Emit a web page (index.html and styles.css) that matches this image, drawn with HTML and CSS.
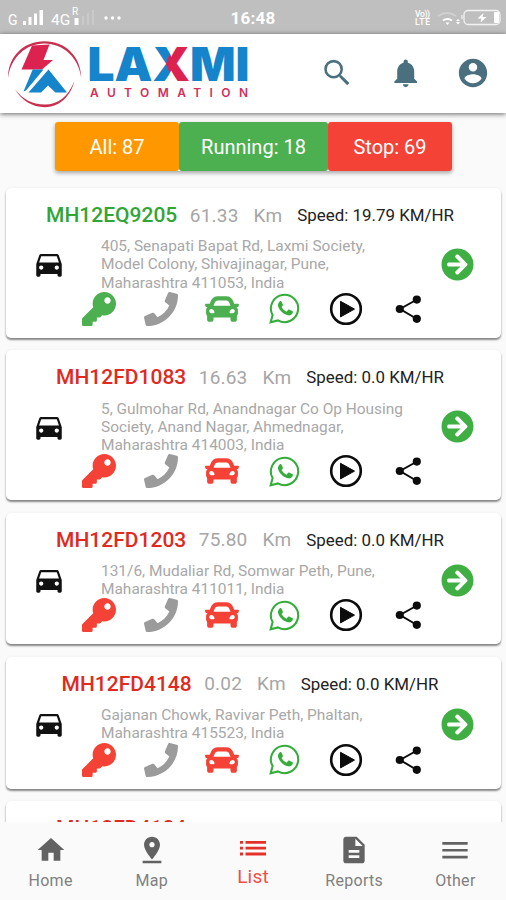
FILE: index.html
```html
<!DOCTYPE html>
<html lang="en">
<head>
    <meta charset="UTF-8">
    <meta name="viewport" content="width=device-width, initial-scale=1.0">
    <title>Laxmi Automation</title>
    <link rel="stylesheet" href="styles.css">
</head>
<body>
    <svg class="sprite" aria-hidden="true">
        <symbol id="car" viewBox="0 0 24 24"><path d="M18.92 6.01C18.72 5.42 18.16 5 17.5 5h-11c-.66 0-1.21.42-1.42 1.01L3 12v8c0 .55.45 1 1 1h1c.55 0 1-.45 1-1v-1h12v1c0 .55.45 1 1 1h1c.55 0 1-.45 1-1v-8l-2.08-5.99zM6.5 16c-.83 0-1.5-.67-1.5-1.5S5.67 13 6.5 13s1.5.67 1.5 1.5S7.33 16 6.5 16zm11 0c-.83 0-1.5-.67-1.5-1.5s.67-1.5 1.5-1.5 1.5.67 1.5 1.5-.67 1.5-1.5 1.5zM5 11l1.5-4.5h11L19 11H5z"/></symbol>
        <symbol id="key" viewBox="0 0 512 512"><path d="M512 176C512 273.2 433.2 352 336 352c-11.2 0-22.2-1.1-32.8-3.1l-24 27A24 24 0 0 1 261.2 384H224v40c0 13.3-10.7 24-24 24h-40v40c0 13.3-10.7 24-24 24H24c-13.3 0-24-10.7-24-24v-78.1c0-6.4 2.5-12.5 7-17l161.8-161.8C163.1 213.8 160 195.3 160 176 160 78.8 238.8 0 336 0c97.5 0 176 78.5 176 176zM336 128c0 26.5 21.5 48 48 48s48-21.5 48-48-21.5-48-48-48-48 21.5-48 48z"/></symbol>
        <symbol id="phone" viewBox="0 0 512 512"><path d="M493.4 24.6l-104-24c-11.3-2.6-22.9 3.3-27.5 13.9l-48 112c-4.2 9.8-1.4 21.3 6.9 28l60.6 49.6c-36 76.7-98.9 140.5-177.2 177.2l-49.6-60.6c-6.8-8.3-18.2-11.1-28-6.9l-112 48C3.9 366.5-2 378.1.6 389.4l24 104C27.1 504.2 36.7 512 48 512c256.1 0 464-207.5 464-464 0-11.2-7.7-20.9-18.6-23.4z"/></symbol>
        <symbol id="taxi" viewBox="0 0 512 512"><path d="M500 176h-59.9l-16.6-41.6C406.4 91.6 365.6 64 319.5 64h-127c-46.1 0-86.9 27.6-104 70.4L71.9 176H12C4.2 176-1.5 183.3.4 190.9l6 24C7.7 220.3 12.5 224 18 224h20.1C24.7 235.7 16 252.8 16 272v48c0 16.1 6.2 30.7 16 41.9V416c0 17.7 14.3 32 32 32h32c17.7 0 32-14.3 32-32v-32h256v32c0 17.7 14.3 32 32 32h32c17.7 0 32-14.3 32-32v-54.1c9.8-11.3 16-25.8 16-41.9v-48c0-19.2-8.7-36.3-22.1-48H494c5.5 0 10.3-3.8 11.6-9.1l6-24c1.9-7.6-3.8-14.9-11.6-14.9zm-352.1-17.8c7.3-18.2 25-30.2 44.6-30.2h127c19.6 0 37.3 12 44.6 30.2L384 208H128l19.9-49.8zM96 319.8c-19.2 0-32-12.8-32-31.9S76.8 256 96 256s48 28.7 48 47.9-28.8 15.9-48 15.9zm320 0c-19.2 0-48 3.2-48-15.9S396.8 256 416 256s32 12.8 32 31.9-12.8 31.9-32 31.9z"/></symbol>
        <symbol id="whatsapp" viewBox="0 0 30 30"><path d="M1.6 28.4l1.9-7A13.2 13.2 0 1 1 8.6 26.5z" fill="none" stroke="currentColor" stroke-width="2"/><path d="M10.3 8.2c.6-.6 1.5-.5 1.9.2l1.2 2.7c.3.7-.1 1.2-1.2 2.4 1.1 2.2 2.6 3.5 4.8 4.600l1.400-1.600c.4-.5.8-.6 1.400-.3l2.700 1.300c.8.4.8.9.4 1.900-.7 1.700-2.700 2.600-4.500 2.200-4.400-1-8.200-4.500-9.500-8.500-.6-1.900.2-3.900 1.400-4.900z"/></symbol>
        <symbol id="play" viewBox="0 0 34 34"><circle cx="17" cy="17" r="14.8" fill="none" stroke="currentColor" stroke-width="2.6"/><path d="M11.500 9.300v15.600L25.500 17.100z" stroke="currentColor" stroke-linejoin="round"/></symbol>
        <symbol id="share" viewBox="0 0 28 30"><path d="M23 5.500L6 15l17 10" fill="none" stroke="currentColor" stroke-width="2"/><circle cx="22.800" cy="5.600" r="4.100"/><circle cx="5.800" cy="15" r="4.100"/><circle cx="22.800" cy="24.800" r="4.100"/></symbol>
        <symbol id="go" viewBox="0 0 512 512"><path d="M256 8c137 0 248 111 248 248S393 504 256 504 8 393 8 256 119 8 256 8zm-28.9 143.6l75.5 72.4H120c-13.3 0-24 10.7-24 24v16c0 13.3 10.7 24 24 24h182.6l-75.5 72.4c-9.7 9.3-9.9 24.8-.4 34.3l11 10.9c9.4 9.4 24.6 9.4 33.9 0L404.3 273c9.4-9.4 9.4-24.6 0-33.9L271.6 106.3c-9.4-9.4-24.6-9.4-33.9 0l-11 10.9c-9.5 9.6-9.3 25.1.4 34.4z"/></symbol>
    </svg>

    <div class="status">
        <svg class="signal" viewBox="0 0 130 34">
            <g font-family="Roboto, sans-serif" fill="#fff">
                <text x="8" y="25" font-size="14">G</text>
                <text x="51" y="25" font-size="15.5">4G</text>
                <text x="72" y="15" font-size="10">R</text>
            </g>
            <path d="M23 21h3v4h-3zM28.5 17h3v8h-3zM34 13.5h3V25h-3zM39.5 10h3.5v15h-3.5zM74.5 18h4v7h-4z" fill="#fff"/>
            <path d="M82 16h2v9h-2zM87 13h2v12h-2zM92 10h2v15h-2z" fill="#cacaca"/>
            <circle cx="106" cy="18" r="1.7" fill="#fff"/><circle cx="112.5" cy="18" r="1.7" fill="#fff"/><circle cx="119" cy="18" r="1.7" fill="#fff"/>
        </svg>
        <span class="time">16:48</span>
        <svg class="battery" viewBox="0 0 96 34">
            <g font-family="Roboto, sans-serif" font-weight="500" font-size="8.5" fill="#fff">
                <text x="5" y="16.5" textLength="15">Vo))</text>
                <text x="5" y="25" textLength="15">LTE</text>
            </g>
            <path d="M28 16q9-6 18 0" fill="none" stroke="#d0d0d0" stroke-width="2"/>
            <path d="M33 20.5q4.5-3 9 0" fill="none" stroke="#fff" stroke-width="2"/>
            <path d="M35.5 22.5h4L37.5 25zM46 21l2-2 2 2zM46 22l2 2.5 2-2.5z" fill="#fff"/>
            <rect x="54" y="10.5" width="36" height="14" rx="4" fill="none" stroke="#f2f2f2" stroke-width="1.3"/>
            <path d="M52 15v4M84.5 12.5h4v10h-4z" fill="#fff" stroke="#fff"/>
            <path d="M73.5 13l-6 5.5h4l-1 4 6-5.5h-4z" fill="#fff"/>
        </svg>
    </div>

    <header class="header">
        <svg class="logo" viewBox="0 34 260 79">
            <defs>
                <pattern id="two-tone" patternUnits="userSpaceOnUse" width="300" height="120">
                    <rect width="300" height="120" fill="#1584cb"/>
                    <path d="M173 44H190.5V84H174L166 64z" fill="#dc2350"/>
                </pattern>
            </defs>
            <path d="M8 78C8 56 24 41.2 44.5 41.2S81 56 81.3 78C78.5 57 63 43.4 44.5 43.4S11 57 8 78z" fill="#c8304f"/>
            <path d="M15 89C21 100 32 107.2 45 107.2S70 98 74.5 81C68 97 58 104.5 45 104.5S22 99 15 89z" fill="#c8304f"/>
            <path d="M32 45.5L49.5 44.5L43.5 60H53L42 69.5H21.5z" fill="#dc2350"/>
            <path d="M32.7 69.5H43.5L26 90.5L23.5 91.5z" fill="#1584cb"/>
            <path d="M48.5 69.5L67 92.5H55.5L48 85.5L41 92.5H28.5z" fill="#1584cb"/>
            <g font-family="Inter, sans-serif">
                <text x="87.5" y="81.3" font-size="47" font-weight="900" textLength="162" lengthAdjust="spacingAndGlyphs" fill="url(#two-tone)">LAXMI</text>
                <text x="90" y="97.3" font-size="12" font-weight="600" textLength="158" fill="#d0305c">AUTOMATION</text>
            </g>
        </svg>
        <div class="tools">
            <svg viewBox="0 0 24 24"><circle cx="9.6" cy="9.3" r="5.7" fill="none" stroke="currentColor" stroke-width="1.8"/><path d="M13.4 14.6l1.3-1.3 6.1 5.7-1.6 1.6z"/></svg>
            <svg viewBox="0 0 24 24"><path d="M12.500 22c1.100 0 2-.9 2-2h-4c0 1.100.89 2 2 2zm6-6v-5c0-3.070-1.640-5.640-4.500-6.320V4c0-.83-.67-1.500-1.500-1.500s-1.500.67-1.500 1.500v.68C8.130 5.360 6.500 7.920 6.500 11v5l-2 2v1h16v-1l-2-2z"/></svg>
            <svg viewBox="0 0 24 24"><path d="M12 2C6.48 2 2 6.48 2 12s4.480 10 10 10 10-4.480 10-10S17.520 2 12 2zm0 3c1.660 0 3 1.340 3 3s-1.340 3-3 3-3-1.340-3-3 1.340-3 3-3zm0 14.200c-2.500 0-4.710-1.280-6-3.220.03-1.990 4-3.080 6-3.080 1.990 0 5.970 1.090 6 3.080-1.290 1.940-3.500 3.220-6 3.220z"/></svg>
        </div>
    </header>

    <main class="content">
        <div class="filters">
            <button class="filter all">All: 87</button>
            <button class="filter running">Running: 18</button>
            <button class="filter stop">Stop: 69</button>
        </div>

        <div class="card is-running">
            <div class="title"><b class="plate">MH12EQ9205</b><span class="km">61.33</span><span class="km unit">Km</span><span class="speed">Speed: 19.79 KM/HR</span></div>
            <div class="info">
                <svg class="car"><use href="#car"/></svg>
                <p class="address">405, Senapati Bapat Rd, Laxmi Society,<br>Model Colony, Shivajinagar, Pune,<br>Maharashtra 411053, India</p>
                <svg class="go"><use href="#go"/></svg>
            </div>
            <div class="actions">
                <svg class="key"><use href="#key"/></svg>
                <svg class="phone"><use href="#phone"/></svg>
                <svg class="taxi"><use href="#taxi"/></svg>
                <svg class="whatsapp"><use href="#whatsapp"/></svg>
                <svg class="play"><use href="#play"/></svg>
                <svg class="share"><use href="#share"/></svg>
            </div>
        </div>

        <div class="card">
            <div class="title"><b class="plate">MH12FD1083</b><span class="km">16.63</span><span class="km unit">Km</span><span class="speed">Speed: 0.0 KM/HR</span></div>
            <div class="info">
                <svg class="car"><use href="#car"/></svg>
                <p class="address">5, Gulmohar Rd, Anandnagar Co Op Housing<br>Society, Anand Nagar, Ahmednagar,<br>Maharashtra 414003, India</p>
                <svg class="go"><use href="#go"/></svg>
            </div>
            <div class="actions">
                <svg class="key"><use href="#key"/></svg>
                <svg class="phone"><use href="#phone"/></svg>
                <svg class="taxi"><use href="#taxi"/></svg>
                <svg class="whatsapp"><use href="#whatsapp"/></svg>
                <svg class="play"><use href="#play"/></svg>
                <svg class="share"><use href="#share"/></svg>
            </div>
        </div>

        <div class="card">
            <div class="title"><b class="plate">MH12FD1203</b><span class="km">75.80</span><span class="km unit">Km</span><span class="speed">Speed: 0.0 KM/HR</span></div>
            <div class="info">
                <svg class="car"><use href="#car"/></svg>
                <p class="address">131/6, Mudaliar Rd, Somwar Peth, Pune,<br>Maharashtra 411011, India</p>
                <svg class="go"><use href="#go"/></svg>
            </div>
            <div class="actions">
                <svg class="key"><use href="#key"/></svg>
                <svg class="phone"><use href="#phone"/></svg>
                <svg class="taxi"><use href="#taxi"/></svg>
                <svg class="whatsapp"><use href="#whatsapp"/></svg>
                <svg class="play"><use href="#play"/></svg>
                <svg class="share"><use href="#share"/></svg>
            </div>
        </div>

        <div class="card">
            <div class="title"><b class="plate">MH12FD4148</b><span class="km">0.02</span><span class="km unit">Km</span><span class="speed">Speed: 0.0 KM/HR</span></div>
            <div class="info">
                <svg class="car"><use href="#car"/></svg>
                <p class="address">Gajanan Chowk, Ravivar Peth, Phaltan,<br>Maharashtra 415523, India</p>
                <svg class="go"><use href="#go"/></svg>
            </div>
            <div class="actions">
                <svg class="key"><use href="#key"/></svg>
                <svg class="phone"><use href="#phone"/></svg>
                <svg class="taxi"><use href="#taxi"/></svg>
                <svg class="whatsapp"><use href="#whatsapp"/></svg>
                <svg class="play"><use href="#play"/></svg>
                <svg class="share"><use href="#share"/></svg>
            </div>
        </div>

        <div class="card">
            <div class="title"><b class="plate">MH12FD4184</b><span class="km">54.20</span><span class="km unit">Km</span><span class="speed">Speed: 0.0 KM/HR</span></div>
        </div>
    </main>

    <nav class="nav">
        <a class="tab">
            <svg viewBox="0 0 24 24"><path d="M10 20v-6h4v6h5v-8h3L12 3 2 12h3v8z"/></svg>
            <span>Home</span>
        </a>
        <a class="tab">
            <svg viewBox="0 0 24 24"><path d="M18 8c0-3.310-2.690-6-6-6S6 4.690 6 8c0 4.500 6 11 6 11s6-6.500 6-11zm-8 0c0-1.100.9-2 2-2s2 .9 2 2-.89 2-2 2c-1.100 0-2-.9-2-2zM5 20v2h14v-2H5z"/></svg>
            <span>Map</span>
        </a>
        <a class="tab active">
            <svg viewBox="0 0 26 20"><path d="M0 2h3v2.800H0zM0 7.800h3v2.800H0zM0 13.600h3v2.800H0zM5.500 2H26v2.800H5.500zM5.500 7.800H26v2.800H5.500zM5.500 13.600H26v2.800H5.500z"/></svg>
            <span>List</span>
        </a>
        <a class="tab">
            <svg viewBox="0 0 24 24"><path d="M14 2H6c-1.100 0-1.990.9-1.990 2L4 20c0 1.100.89 2 1.990 2H18c1.100 0 2-.9 2-2V8l-6-6zm2 16H8v-2h8v2zm0-4H8v-2h8v2zm-3-5V3.500L18.500 9H13z"/></svg>
            <span>Reports</span>
        </a>
        <a class="tab">
            <svg viewBox="0 0 24 24"><path d="M2.500 6h19v2h-19zM2.500 11.200h19v2h-19zM2.500 16.400h19v2h-19z"/></svg>
            <span>Other</span>
        </a>
    </nav>
</body>
</html>
```
FILE: styles.css
```css
* {
    box-sizing: border-box;
}
body {
    margin: 0;
    height: 900px;
    display: flex;
    flex-direction: column;
    overflow: hidden;
    background: #fafafa;
    font-family: Roboto, sans-serif;
}
svg {
    display: block;
    fill: currentColor;
    flex-shrink: 0;
}
.sprite {
    display: none;
}

.status {
    height: 34px;
    flex-shrink: 0;
    display: grid;
    grid-template-columns: 1fr auto 1fr;
    align-items: center;
    background: #bfbfbf;
    color: #fff;
}
.signal {
    width: 130px;
    height: 34px;
}
.time {
    padding-top: 2px;
    font-size: 17px;
    font-weight: 700;
    letter-spacing: 0.2px;
}
.battery {
    width: 96px;
    height: 34px;
    justify-self: end;
}

.header {
    height: 79px;
    flex-shrink: 0;
    display: flex;
    justify-content: space-between;
    background: #fff;
    box-shadow: 0 1px 5px rgba(0, 0, 0, 0.6);
    z-index: 1;
}
.logo {
    width: 260px;
    height: 79px;
}
.tools {
    display: flex;
    align-items: center;
    gap: 34px;
    padding: 0 16px 1px 0;
    color: #4a7080;
}
.tools svg {
    width: 34px;
    height: 34px;
}

.content {
    flex: 1;
    min-height: 0;
    overflow: hidden;
    padding: 9px 5px 0 6px;
}
.filters {
    display: flex;
    width: 397px;
    height: 49px;
    margin: 0 0 17px 49px;
    border-radius: 3px;
    box-shadow: 0 2px 4px rgba(0, 0, 0, 0.35);
}
.filter {
    width: 124px;
    border: 0;
    border-radius: 3px;
    padding: 0;
    color: #fff;
    font: 20px Roboto, sans-serif;
}
.all {
    background: #ff9800;
}
.running {
    width: 149px;
    background: #4caf50;
}
.stop {
    background: #f44336;
}

.card {
    margin-bottom: 12.6px;
    padding: 14px 0 12px;
    border-radius: 5px;
    background: #fff;
    box-shadow: 0 2px 2px rgba(0, 0, 0, 0.45), 0 0 3px rgba(0, 0, 0, 0.06);
    color: #f44336;
}
.is-running {
    color: #4caf50;
}
.title {
    display: flex;
    justify-content: center;
    align-items: center;
    height: 26px;
    padding-right: 7px;
    white-space: nowrap;
}
.plate {
    color: #e02a1f;
    font-size: 21px;
    font-weight: 500;
}
.is-running .plate {
    color: #31a636;
}
.km {
    margin-left: 12.5px;
    color: #a6a6a6;
    font-size: 19px;
    letter-spacing: 0.2px;
}
.unit {
    margin-left: 15px;
}
.speed {
    margin-left: 15px;
    color: #222;
    font-size: 16.9px;
}
.info {
    display: grid;
    grid-template-columns: 95px 1fr 61px;
    align-items: center;
    margin-top: 9.2px;
}
.car {
    width: 34px;
    height: 34px;
    margin-left: 26px;
    color: #111;
}
.address {
    margin: 0;
    color: #a8a8a8;
    font-size: 15.45px;
    line-height: 18.2px;
    white-space: nowrap;
}
.go {
    width: 33px;
    height: 33px;
    margin-left: 1px;
    color: #3fae43;
}
.actions {
    display: grid;
    grid-template-columns: repeat(6, 61.8px);
    place-items: center;
    height: 34px;
    margin-left: 62px;
}
.key,
.phone,
.taxi {
    width: 34px;
    height: 34px;
}
.phone {
    color: #9b9b9b;
}
.whatsapp {
    width: 31px;
    height: 31px;
    color: #35ad3a;
}
.play {
    width: 34px;
    height: 34px;
    color: #0c0c0c;
}
.share {
    width: 28px;
    height: 30px;
    color: #0c0c0c;
}

.nav {
    height: 78px;
    flex-shrink: 0;
    display: grid;
    grid-template-columns: repeat(5, 1fr);
    background: #fafafa;
    z-index: 1;
}
.tab {
    display: flex;
    flex-direction: column;
    align-items: center;
    padding-top: 12px;
    color: #626262;
    font-size: 16px;
    letter-spacing: 0.3px;
}
.tab svg {
    width: 32px;
    height: 32px;
}
.tab span {
    margin-top: 4.5px;
    color: #808080;
}
.tab.active {
    color: #e53027;
    font-size: 19px;
    letter-spacing: 0.2px;
}
.active svg {
    width: 26px;
    height: 20px;
    margin: 5px 0 1.5px;
}
.tab.active span {
    color: #ef4f48;
}
```
